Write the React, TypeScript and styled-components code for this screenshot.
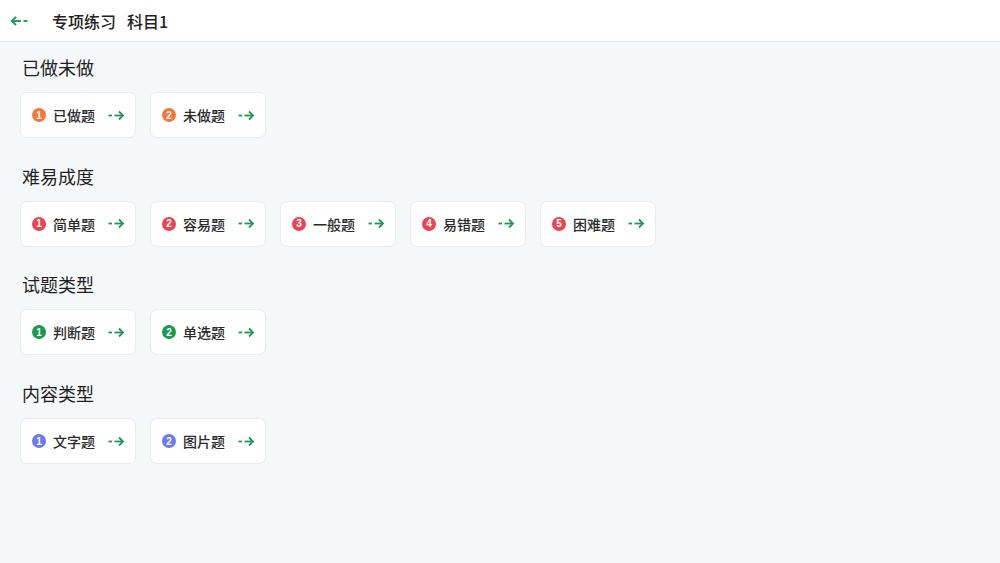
import React, { FC } from "react";
import styled, { createGlobalStyle } from "styled-components";

const GlobalStyle = createGlobalStyle`
  html, body {
    margin: 0;
    padding: 0;
    background: #f5f8f9;
    font-family: "Noto Sans CJK SC", "Noto Sans", sans-serif;
  }
`;

const Page = styled.div`
  width: 1000px;
  height: 563px;
  background: #f5f8f9;
  overflow: hidden;
`;

const Header = styled.div`
  height: 41px;
  display: flex;
  align-items: center;
  background: #fff;
  border-bottom: 1.5px solid #e3e6e8;
  padding-left: 10px;
`;

const BackButton = styled.div`
  width: 18px;
  height: 12px;
  display: flex;
  align-items: center;
  margin-right: 24px;
`;

const Title = styled.div`
  font-size: 16px;
  font-weight: 500;
  color: #222;
  display: flex;
  gap: 11px;
  line-height: 1;
`;

const Content = styled.div`
  padding: 13px 20px 0;
`;

const Section = styled.section`
  margin-bottom: 25.7px;
`;

const SectionTitle = styled.h2`
  margin: 0 0 13px 2px;
  font-size: 18px;
  line-height: 24px;
  font-weight: 400;
  color: #1f1f1f;
`;

const Row = styled.div`
  display: flex;
  gap: 14px;
`;

const Card = styled.div`
  box-sizing: border-box;
  width: 116px;
  height: 46px;
  background: #fff;
  border: 1.5px solid #e8ecee;
  border-radius: 7px;
  display: flex;
  align-items: center;
  padding: 0 10px 0 11px;
`;

const Badge = styled.span<{ $color: string }>`
  width: 14px;
  height: 14px;
  border-radius: 50%;
  background: ${(p) => p.$color};
  color: #fff;
  font-family: "Liberation Sans", Arial, sans-serif;
  font-size: 10px;
  font-weight: 700;
  display: flex;
  align-items: center;
  justify-content: center;
  flex-shrink: 0;
`;

const Label = styled.span`
  margin-left: 7px;
  font-size: 14px;
  font-weight: 500;
  color: #2a2a2a;
  flex: 1;
  line-height: 1;
`;

const GREEN = "#1c9a55";

const ForwardArrow: FC = () => (
  <svg width="17" height="11" viewBox="0 0 17 11" fill="none">
    <path d="M0.5 5.5H4" stroke={GREEN} strokeWidth="1.8" />
    <path d="M6.5 5.5H15" stroke={GREEN} strokeWidth="1.8" />
    <path d="M11 1.5L15 5.5L11 9.5" stroke={GREEN} strokeWidth="1.8" />
  </svg>
);

const BackArrow: FC = () => (
  <svg width="18" height="12" viewBox="0 0 18 12" fill="none">
    <path d="M2 6H11" stroke={GREEN} strokeWidth="1.9" />
    <path d="M13.5 6H17.5" stroke={GREEN} strokeWidth="1.9" />
    <path d="M6 1.8L1.8 6L6 10.2" stroke={GREEN} strokeWidth="1.9" />
  </svg>
);

type Item = { label: string };
type Group = { title: string; color: string; items: Item[] };

const ORANGE = "#f2783a";
const RED = "#ea4453";
const DARKGREEN = "#199a4c";
const BLUE = "#6a7af0";

const groups: Group[] = [
  { title: "已做未做", color: ORANGE, items: [{ label: "已做题" }, { label: "未做题" }] },
  {
    title: "难易成度",
    color: RED,
    items: [
      { label: "简单题" },
      { label: "容易题" },
      { label: "一般题" },
      { label: "易错题" },
      { label: "困难题" },
    ],
  },
  { title: "试题类型", color: DARKGREEN, items: [{ label: "判断题" }, { label: "单选题" }] },
  { title: "内容类型", color: BLUE, items: [{ label: "文字题" }, { label: "图片题" }] },
];

const App: FC = () => (
  <>
    <GlobalStyle />
    <Page>
      <Header>
        <BackButton>
          <BackArrow />
        </BackButton>
        <Title>
          <span>专项练习</span>
          <span>科目1</span>
        </Title>
      </Header>
      <Content>
        {groups.map((g) => (
          <Section key={g.title}>
            <SectionTitle>{g.title}</SectionTitle>
            <Row>
              {g.items.map((it, i) => (
                <Card key={it.label}>
                  <Badge $color={g.color}>{i + 1}</Badge>
                  <Label>{it.label}</Label>
                  <ForwardArrow />
                </Card>
              ))}
            </Row>
          </Section>
        ))}
      </Content>
    </Page>
  </>
);

export default App;
